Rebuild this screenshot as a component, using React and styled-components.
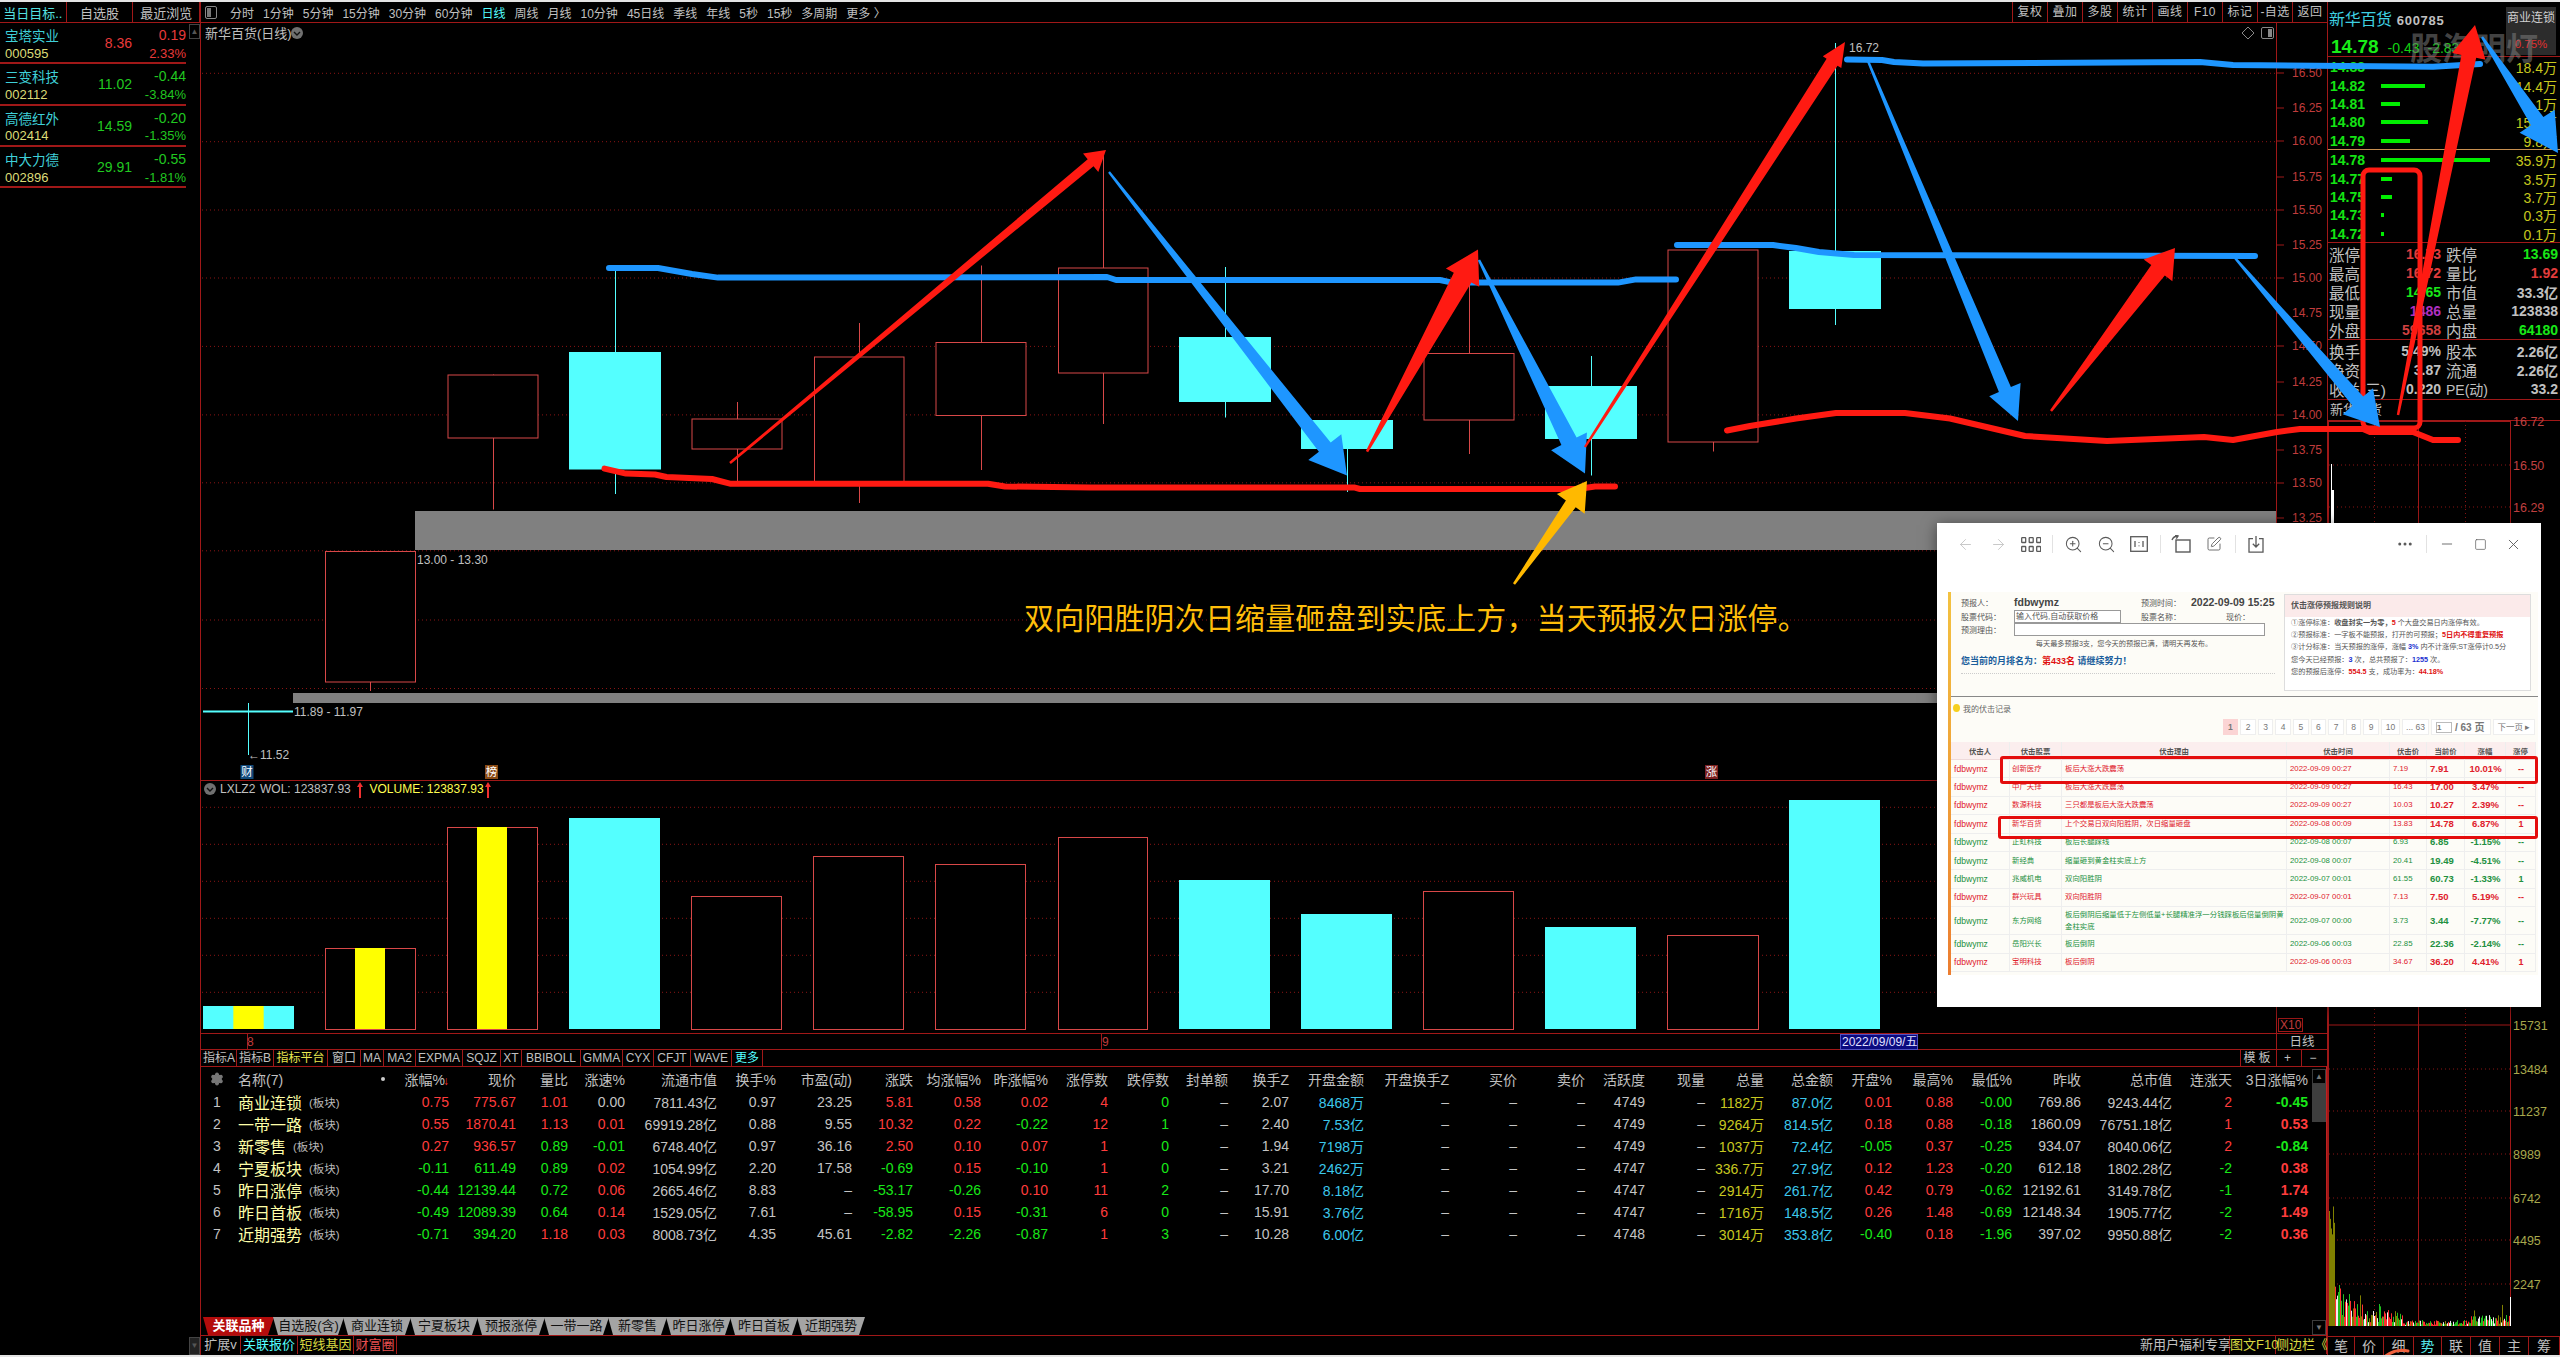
import React from "react";
import styled, { createGlobalStyle } from "styled-components";
import { ArrowLeft, ArrowRight, ZoomIn, ZoomOut, SquarePen, Ellipsis, Minus, Square, X, Settings } from "lucide-react";

const SANS = `"Liberation Sans", "Noto Sans CJK SC", sans-serif`;
const LINE = "#a01818";
const DOT = "#8a1414";
const RED = "#ff3c3c";
const GREEN = "#18e818";
const CYAN = "#54ffff";
const CANDLE = "#d84848";

const Global = createGlobalStyle`
  html, body { margin: 0; padding: 0; background: #000; }
  body { font-family: ${SANS}; color: #c8c8c8; }
  * { box-sizing: border-box; }
`;

const Page = styled.div`
  position: relative;
  width: 2560px;
  height: 1357px;
  overflow: hidden;
  background: #000;
  border-top: 2px solid #e4e4e4;
  border-bottom: 2px solid #e4e4e4;
  display: grid;
  grid-template-columns: 200px 2127px 233px;
`;

/* ---------- left watch list ---------- */
const LeftCol = styled.div`
  display: flex;
  flex-direction: column;
  height: 1353px;
`;
const LeftTabs = styled.div`
  display: grid;
  grid-template-columns: repeat(3, 1fr);
  height: 21px;
  border-bottom: 1px solid ${LINE};
`;
const LeftTab = styled.div`
  display: flex;
  align-items: center;
  justify-content: center;
  font-size: 13px;
  border-right: 1px solid ${LINE};
  color: ${(p) => (p.$active ? "#54e0e0" : "#c0c0c0")};
`;
const LeftBody = styled.div`
  display: flex;
  justify-content: space-between;
  flex: 1;
`;
const WatchList = styled.div`
  width: 186px;
`;
const WatchRow = styled.div`
  display: grid;
  grid-template-columns: 70px 57px 54px;
  grid-template-rows: 1fr 1fr;
  height: 41.3px;
  padding: 2px 5px 1px 5px;
  border-bottom: 2px solid ${LINE};
  align-items: center;
  font-size: 13.5px;
`;
const WatchName = styled.div`
  color: #3fd0d8;
  font-size: 13.5px;
`;
const WatchCode = styled.div`
  color: #dcdc78;
  grid-row: 2;
  font-size: 13px;
`;
const WatchPrice = styled.div`
  grid-row: 1 / 3;
  grid-column: 2;
  text-align: right;
  font-size: 14px;
  color: ${(p) => p.$c};
`;
const WatchChange = styled.div`
  text-align: right;
  font-size: ${(p) => (p.$small ? 13 : 14)}px;
  color: ${(p) => p.$c};
`;
const ScrollNub = styled.div`
  width: 11px;
  height: 15px;
  border: 1px solid #444;
  margin-top: 1px;
  color: #555;
  font-size: 8px;
  line-height: 13px;
  text-align: center;
`;
const NubBottom = styled(ScrollNub)`
  height: 18px;
  margin: 0 0 0 auto;
  line-height: 16px;
  background: #222;
`;

/* ---------- centre column ---------- */
const CenterCol = styled.div`
  display: flex;
  flex-direction: column;
  border-left: 1px solid ${LINE};
  height: 1353px;
  min-width: 0;
`;
const TopBar = styled.div`
  display: flex;
  align-items: center;
  height: 21px;
  border-bottom: 1px solid ${LINE};
  padding-left: 4px;
`;
const LayoutIcon = styled.span`
  display: inline-block;
  width: 12px;
  height: 13px;
  border: 1px solid #888;
  border-radius: 2px;
  margin-right: 6px;
  background: linear-gradient(90deg, #777 0 45%, #000 45%);
  box-shadow: inset 0 0 0 1px #000;
`;
const Period = styled.span`
  font-size: 12px;
  white-space: nowrap;
  margin-left: ${(p) => p.$first ? 7 : 9}px;
  color: ${(p) => (p.$active ? "#54ffff" : "#c0c0c0")};
`;
const Spacer = styled.div`
  flex: 1;
`;
const TopButton = styled.div`
  width: 35px;
  height: 20px;
  border-left: 1px solid ${LINE};
  text-align: center;
  font-size: 12px;
  line-height: 20px;
  color: #c0c0c0;
  letter-spacing: 0.4px;
`;
const ChartSvg = styled.svg`
  display: block;
  flex: none;
  overflow: visible;
`;
const T = styled.text`
  font-family: ${SANS};
  font-size: ${(p) => p.$s || 12}px;
  fill: ${(p) => p.$f || "#c0c0c0"};
  text-anchor: ${(p) => p.$a || "start"};
  dominant-baseline: central;
`;

/* indicator strip */
const IndicatorBar = styled.div`
  display: flex;
  height: 16px;
  flex: none;
  padding-left: 1px;
`;
const IndicatorTab = styled.div`
  width: ${(p) => p.$w}px;
  text-align: center;
  font-size: 12px;
  line-height: 16px;
  white-space: nowrap;
  border-right: 1px solid ${LINE};
  color: ${(p) => p.$c || "#c0c0c0"};
  background: ${(p) => p.$bg || "transparent"};
`;
const TemplateTab = styled(IndicatorTab)`
  border-right: none;
  border-left: 1px solid ${LINE};
  letter-spacing: 3px;
`;

/* lower table block */
const Lower = styled.div`
  display: flex;
  height: 270px;
  flex: none;
  border-top: 1px solid ${LINE};
  border-bottom: 1px solid ${LINE};
  border-right: 1px solid #c02020;
`;
const LowerMain = styled.div`
  display: flex;
  flex-direction: column;
  width: 2111px;
`;
const TableBox = styled.div`
  flex: 1;
`;
const RowGrid = styled.div`
  display: grid;
  grid-template-columns: 189px 59px 67px 52px 57px 92px 59px 76px 61px 68px 67px 60px 61px 59px 61px 75px 85px 68px 68px 60px 60px 59px 69px 59px 61px 59px 69px 91px 60px 76px;
  align-items: center;
  height: ${(p) => (p.$head ? 23 : 22)}px;
`;
const Cell = styled.div`
  text-align: right;
  font-size: 14px;
  white-space: nowrap;
  font-weight: ${(p) => (p.$bold ? 700 : 400)};
  color: ${(p) => p.$c || "#c4c4c4"};
`;
const HeadCell = styled(Cell)`
  color: #c0c0c0;
  font-size: 14px;
`;
const SortArrow = styled.span`
  color: #ff3030;
  font-size: 12px;
  margin-left: -2px;
`;
const NameCell = styled.div`
  display: flex;
  align-items: center;
`;
const HeadName = styled(NameCell)`
  position: relative;
  color: #c0c0c0;
  font-size: 14px;
`;
const IndexBox = styled.div`
  width: 32px;
  margin-right: 5px;
  text-align: center;
  font-size: 14px;
  color: #c4c4c4;
  display: flex;
  justify-content: center;
`;
const StockName = styled.span`
  font-size: 16px;
  color: #ffffa8;
`;
const BlockTag = styled.span`
  font-size: 11.5px;
  margin-left: 7px;
  color: #b8b8b8;
`;
const Dot = styled.span`
  margin-left: auto;
  margin-right: 5px;
  width: 4px;
  height: 4px;
  border-radius: 50%;
  background: #ccc;
`;
const SlantTabs = styled.div`
  display: flex;
  height: 18px;
  padding-left: 2px;
`;
const SlantTab = styled.div`
  width: ${(p) => p.$w}px;
  margin-right: -1px;
  text-align: center;
  font-size: 13px;
  line-height: 18px;
  font-weight: ${(p) => (p.$active ? 700 : 400)};
  color: ${(p) => (p.$active ? "#fff" : "#111")};
  background: ${(p) => (p.$active ? "#b40c0c" : "#a4a4a4")};
  clip-path: polygon(0 0, 100% 0, calc(100% - 6px) 100%, 5px 100%);
`;
const ScrollBar = styled.div`
  width: 14px;
  display: flex;
  flex-direction: column;
  margin-left: 1px;
  padding: 2px 0 0 0;
`;
const ScrollBtn = styled.div`
  height: 15px;
  border: 1px solid #3c3c3c;
  color: #777;
  font-size: 8px;
  line-height: 13px;
  text-align: center;
`;
const ScrollThumb = styled.div`
  height: 38px;
  background: #3e3e3e;
  margin-bottom: auto;
`;

const BottomBar = styled.div`
  display: flex;
  height: 18px;
  flex: none;
`;
const BottomItem = styled.div`
  width: ${(p) => p.$w}px;
  text-align: center;
  font-size: 13px;
  line-height: 18px;
  white-space: nowrap;
  border-right: 1px solid ${LINE};
  color: ${(p) => p.$c || "#c0c0c0"};
`;

/* ---------- right column ---------- */
const RightCol = styled.div`
  display: flex;
  flex-direction: column;
  border-left: 1px solid ${LINE};
  height: 1353px;
`;
const QuoteHead = styled.div`
  position: relative;
  height: 55px;
  border-bottom: 1px solid ${LINE};
  padding: 4px 0 0 1px;
`;
const TitleLine = styled.div`
  display: flex;
  align-items: baseline;
  gap: 5px;
`;
const StockTitle = styled.span`
  font-size: 16px;
  color: #3fd0e0;
  letter-spacing: -0.3px;
`;
const StockCode = styled.span`
  font-size: 13px;
  font-weight: 700;
  letter-spacing: 0.7px;
  color: #c0c0c0;
`;
const PriceLine = styled.div`
  display: flex;
  align-items: baseline;
  margin-top: 6px;
  padding-left: 2px;
  color: #12d012;
  font-size: 14px;
`;
const BigPrice = styled.span`
  font-size: 19px;
  font-weight: 700;
  color: #18ee18;
  margin-right: 9px;
`;
const PriceDelta = styled.span`
  margin-right: 8px;
`;
const LinkedBox = styled.div`
  position: absolute;
  left: 178px;
  top: 5px;
  width: 50px;
  height: 48px;
  background: #2c2c2c;
  text-align: center;
  font-size: 12px;
  line-height: 22px;
  color: #d0d0d0;
`;
const LinkedPct = styled.div`
  color: #e03030;
  font-size: 11.5px;
  margin-top: 4px;
`;
const Watermark = styled.div`
  position: absolute;
  left: 82px;
  top: 21px;
  font-size: 32px;
  font-weight: 700;
  white-space: nowrap;
  color: rgba(125, 125, 125, 0.55);
`;
const BookSide = styled.div`
  height: 93px;
  border-bottom: 1px solid ${(p) => p.$line};
  padding: 0 3px 0 1px;
  display: flex;
  flex-direction: column;
  justify-content: space-around;
`;
const BookRow = styled.div`
  display: grid;
  grid-template-columns: 52px 1fr auto;
  align-items: center;
  height: 18px;
`;
const BookPrice = styled.span`
  font-size: 14px;
  font-weight: 700;
  color: #14e414;
  padding-left: 1px;
`;
const BookBar = styled.span`
  display: block;
  height: 4px;
  width: ${(p) => p.$w}px;
  background: #00ee00;
`;
const BookVol = styled.span`
  font-size: 14px;
  color: #c8c81e;
`;
const StatBlock = styled.div`
  height: ${(p) => p.$h}px;
  border-bottom: 1px solid ${LINE};
  padding: 1px 2px 0 1px;
  display: grid;
  grid-template-columns: 1fr 1fr;
  column-gap: 5px;
  grid-auto-rows: 19px;
`;
const Stat = styled.div`
  display: flex;
  justify-content: space-between;
  align-items: center;
  white-space: nowrap;
`;
const StatLabel = styled.span`
  font-size: ${(p) => p.$s || 15.5}px;
  color: #c0c0c0;
`;
const StatValue = styled.span`
  font-size: 14px;
  font-weight: 700;
  color: ${(p) => p.$c || "#c0c0c0"};
`;
const NameRow = styled.div`
  height: 21px;
  border-bottom: 1px solid ${LINE};
  font-size: 13px;
  line-height: 20px;
  padding-left: 2px;
  color: #c0c0c0;
`;
const RightTabs = styled.div`
  display: grid;
  grid-template-columns: 27px 29px 30px 28px 29px 29px 29px 31px;
  height: 19px;
  border-top: 1px solid ${LINE};
`;
const RightTab = styled.div`
  font-size: 14px;
  line-height: 18px;
  text-align: center;
  border-right: 1px solid ${LINE};
  color: ${(p) => (p.$active ? "#54e8e8" : "#c0c0c0")};
`;

/* ---------- annotation overlay ---------- */
const Overlay = styled.svg`
  position: absolute;
  left: 0;
  top: -2px;
  width: 2560px;
  height: 1357px;
  pointer-events: none;
`;
const Caption = styled.div`
  position: absolute;
  left: 1024px;
  top: 592px;
  font-family: "Noto Sans CJK SC", sans-serif;
  font-size: 30px;
  line-height: 44px;
  white-space: nowrap;
  color: #ffbe0a;
  letter-spacing: 0.15px;
`;

/* ---------- floating viewer window ---------- */
const Viewer = styled.div`
  position: absolute;
  left: 1937px;
  top: 521px;
  width: 604px;
  height: 484px;
  background: #fff;
  box-shadow: 0 2px 14px rgba(0, 0, 0, 0.5);
  display: flex;
  flex-direction: column;
  color: #333;
`;
const ViewerBar = styled.div`
  display: flex;
  align-items: center;
  height: 42px;
  padding: 0 11.5px;
  flex: none;
`;
const ToolBtn = styled.div`
  width: 33px;
  display: flex;
  align-items: center;
  justify-content: center;
  color: ${(p) => (p.$dim ? "#c4c4c4" : "#5a5a5a")};
`;
const ToolSep = styled.div`
  width: 1px;
  height: 18px;
  margin: 0 4px;
  background: #e2e2e2;
`;
const Shot = styled.div`
  position: relative;
  margin: 27px 3px 0 11px;
  height: 383px;
  background: #fdfcf7;
  border-left: 3px solid;
  border-image: linear-gradient(#f3c240, #ec7d30) 1;
  overflow: hidden;
  display: flex;
  flex-direction: column;
`;
const ShotTop = styled.div`
  display: flex;
  height: 105px;
  flex: none;
  border-bottom: 1px solid #888;
`;
const FormArea = styled.div`
  width: 333px;
  padding: 3px 9px 0 10px;
  font-size: 8px;
  color: #555;
`;
const FormLine = styled.div`
  display: flex;
  align-items: center;
  height: ${(p) => p.$h || 14}px;
`;
const FormLabel = styled.span`
  width: ${(p) => p.$w}px;
  flex: none;
`;
const FormBold = styled.span`
  width: ${(p) => p.$w || "auto"};
  font-size: 10.5px;
  font-weight: 700;
  color: #444;
  white-space: nowrap;
`;
const FormInput = styled.div`
  width: ${(p) => p.$w}px;
  height: 13px;
  flex: none;
  margin-right: ${(p) => p.$mr || 0}px;
  border: 1px solid #999;
  background: #fff;
  font-size: 8px;
  line-height: 12px;
  padding-left: 1px;
  white-space: nowrap;
  overflow: hidden;
`;
const Notice = styled.div`
  font-size: 7.2px;
  text-align: center;
  height: 13px;
  line-height: 15px;
  padding-left: 12px;
  white-space: nowrap;
`;
const RankLine = styled.div`
  margin-top: 5px;
  height: 15px;
  line-height: 14px;
  font-size: 9px;
  font-weight: 700;
  color: #1b5e9c;
  white-space: nowrap;
  border-bottom: 1px dotted transparent;
`;
const DottedRule = styled.div`
  margin-top: 4px;
  border-top: 1px dotted #ccc;
`;
const RuleBox = styled.div`
  width: 247px;
  height: 97px;
  margin-top: 2px;
  border: 1px solid #ddd;
  background: #fff;
`;
const RuleHead = styled.div`
  height: 22px;
  background: #fbeaea;
  padding-left: 6px;
  font-size: 8px;
  font-weight: 700;
  line-height: 22px;
  color: #555;
`;
const RuleText = styled.div`
  height: 12.2px;
  padding-left: 6px;
  font-size: 7.2px;
  line-height: 12px;
  white-space: nowrap;
  color: #555;
  &:first-of-type { margin-top: 5px; }
`;
const Hot = styled.b`
  color: ${(p) => p.$c || "#e01010"};
  font-weight: 700;
`;
const RecordTitle = styled.div`
  display: flex;
  align-items: center;
  gap: 3px;
  height: 22px;
  padding-left: 2px;
  font-size: 8px;
  color: #666;
  flex: none;
`;
const Bulb = styled.span`
  width: 7px;
  height: 8px;
  border-radius: 50%;
  background: #f6d020;
`;
const Pager = styled.div`
  display: flex;
  justify-content: flex-end;
  gap: 2px;
  height: 16px;
  padding-right: 3px;
  flex: none;
`;
const PageItem = styled.div`
  width: ${(p) => p.$w || 15.6}px;
  font-size: ${(p) => p.$s || 8.5}px;
  line-height: 15px;
  text-align: center;
  white-space: nowrap;
  font-weight: ${(p) => (p.$on ? 700 : 400)};
  color: #777;
  background: ${(p) => (p.$on ? "#fbd4d4" : "#fff")};
  border: 1px solid ${(p) => (p.$on ? "#fbd4d4" : "#eee")};
`;
const PageGoto = styled(PageItem)`
  font-weight: 700;
  font-size: 10px;
  display: flex;
  align-items: center;
  gap: 3px;
  padding-left: 4px;
`;
const PageBox = styled.span`
  width: 16px;
  height: 11px;
  border: 1px solid #bbb;
  background: #fff;
  font-size: 8px;
  line-height: 9px;
  text-align: left;
`;
const RecordGrid = styled.div`
  display: grid;
  grid-template-columns: 59px 52px 225px 103px 37px 38px 41px 30px;
  margin-top: 7px;
  align-items: stretch;
`;
const RecHead = styled.div`
  height: 18px;
  background: #fbeeee;
  border-bottom: 1px solid #eedada;
  border-right: 1px solid #eee;
  text-align: center;
  font-size: 7.4px;
  font-weight: 700;
  line-height: 20px;
  color: #555;
`;
const RecCell = styled.div`
  height: ${(p) => (p.$tall ? 28 : 18.4)}px;
  display: flex;
  align-items: center;
  justify-content: ${(p) => (p.$center ? "center" : "flex-start")};
  padding: 0 2px 0 ${(p) => p.$pl || 3}px;
  border-right: 1px solid #eee;
  border-bottom: 1px solid #eee;
  font-size: ${(p) => p.$s || 7.4}px;
  line-height: 12px;
  font-weight: ${(p) => (p.$bold ? 700 : 400)};
  color: ${(p) => (p.$up ? "#e0202c" : "#229040")};
  overflow: hidden;
`;
const Highlight = styled.div`
  position: absolute;
  left: ${(p) => p.$l}px;
  top: ${(p) => p.$t}px;
  width: ${(p) => p.$w}px;
  height: ${(p) => p.$h}px;
  border: 3px solid #e40d0d;
  border-radius: 3px;
`;

/* ---------- data ---------- */
const PERIODS = ["分时","1分钟","5分钟","15分钟","30分钟","60分钟","日线","周线","月线","10分钟","45日线","季线","年线","5秒","15秒","多周期","更多 〉"];
const TOOLS = ["复权","叠加","多股","统计","画线","F10","标记","-自选","返回"];
const WATCH = [
  ["宝塔实业","000595","8.36","0.19","2.33%",true],
  ["三变科技","002112","11.02","-0.44","-3.84%",false],
  ["高德红外","002414","14.59","-0.20","-1.35%",false],
  ["中大力德","002896","29.91","-0.55","-1.81%",false],
];
const INDICATORS = [["指标A",35],["指标B",37],["指标平台",54,"#e8e850"],["窗口",33],["MA",23],["MA2",32],["EXPMA",47],["SQJZ",38],["XT",21],["BBIBOLL",59],["GMMA",42],["CYX",31],["CFJT",37],["WAVE",41],["更多",31,"#54ffff"]];
const COLS = [
  ["涨幅%","sign"],["现价","row"],["量比","ratio"],["涨速%","sign"],["流通市值"],["换手%"],["市盈(动)"],["涨跌","sign"],["均涨幅%","sign"],["昨涨幅%","sign"],["涨停数","red"],["跌停数","green"],["封单额"],["换手Z"],["开盘金额","cyan"],["开盘换手Z"],["买价"],["卖价"],["活跃度"],["现量"],["总量","yellow"],["总金额","cyan"],["开盘%","sign"],["最高%","sign"],["最低%","sign"],["昨收"],["总市值"],["连涨天","sign"],["3日涨幅%","signb"],
];
const BLOCKS = [
  ["商业连锁","0.75 775.67 1.01 0.00 7811.43亿 0.97 23.25 5.81 0.58 0.02 4 0 – 2.07 8468万 – – – 4749 – 1182万 87.0亿 0.01 0.88 -0.00 769.86 9243.44亿 2 -0.45"],
  ["一带一路","0.55 1870.41 1.13 0.01 69919.28亿 0.88 9.55 10.32 0.22 -0.22 12 1 – 2.40 7.53亿 – – – 4749 – 9264万 814.5亿 0.18 0.88 -0.18 1860.09 76751.18亿 1 0.53"],
  ["新零售","0.27 936.57 0.89 -0.01 6748.40亿 0.97 36.16 2.50 0.10 0.07 1 0 – 1.94 7198万 – – – 4749 – 1037万 72.4亿 -0.05 0.37 -0.25 934.07 8040.06亿 2 -0.84"],
  ["宁夏板块","-0.11 611.49 0.89 0.02 1054.99亿 2.20 17.58 -0.69 0.15 -0.10 1 0 – 3.21 2462万 – – – 4747 – 336.7万 27.9亿 0.12 1.23 -0.20 612.18 1802.28亿 -2 0.38"],
  ["昨日涨停","-0.44 12139.44 0.72 0.06 2665.46亿 8.83 – -53.17 -0.26 0.10 11 2 – 17.70 8.18亿 – – – 4747 – 2914万 261.7亿 0.42 0.79 -0.62 12192.61 3149.78亿 -1 1.74"],
  ["昨日首板","-0.49 12089.39 0.64 0.14 1529.05亿 7.61 – -58.95 0.15 -0.31 6 0 – 15.91 3.76亿 – – – 4747 – 1716万 148.5亿 0.26 1.48 -0.69 12148.34 1905.77亿 -2 1.49"],
  ["近期强势","-0.71 394.20 1.18 0.03 8008.73亿 4.35 45.61 -2.82 -2.26 -0.87 1 3 – 10.28 6.00亿 – – – 4748 – 3014万 353.8亿 -0.40 0.18 -1.96 397.02 9950.88亿 -2 0.36"],
];
const SLANT = [["关联品种",71,true],["自选股(含)",71],["商业连锁",68],["宁夏板块",68],["预报涨停",68],["一带一路",65],["新零售",59],["昨日涨停",65],["昨日首板",68],["近期强势",68]];
const SELL = [["14.83",0,"18.4万"],["14.82",44,"14.4万"],["14.81",19,"6.1万"],["14.80",47,"15.9万"],["14.79",29,"9.8万"]];
const BUY = [["14.78",109,"35.9万"],["14.77",11,"3.5万"],["14.75",11,"3.7万"],["14.73",3,"0.3万"],["14.72",3,"0.1万"]];

const CANDLES = [
  [324,414,551,681.5,551,691,0],[446.5,536.5,374.5,437.5,374.5,509.5,0],[568,659,352,468.5,270,494,1],
  [690.5,780.5,418.5,448.5,402,481,0],[813,902.5,356.5,484,323,503,0],[934.5,1024.5,342,415,265.5,470,0],
  [1057,1146.5,267.5,372.5,151,424,0],[1178,1269,337,401,267,417.5,1],[1300,1391,420,448,420,492,1],
  [1422.5,1512.5,353,419.5,259,454,0],[1544,1635,386,438,356,475.5,1],[1666.5,1756.5,249.5,441.5,249.5,451.5,0],
  [1788,1879,251,308,43,325,1],
];
const BARS = [
  [202,293,1006,"y"],[324,414,948,"y"],[446,536,827,"y"],[568,659,818,"c"],[690,780,896,"r"],[812,902,856,"r"],
  [934,1024,864,"r"],[1057,1146,837,"r"],[1178,1269,880,"c"],[1300,1391,914,"c"],[1422,1512,891,"r"],[1544,1635,927,"c"],
  [1666,1757,935,"r"],[1788,1879,800,"c"],
];
const PRICE_GRID = [73.3,141.7,210,278,346.4,414.9,482.8,550.8,620,688.5];
const PRICE_LABELS = [["16.50",73],["16.25",108],["16.00",141],["15.75",177],["15.50",210],["15.25",245],["15.00",278],["14.75",313],["14.50",346],["14.25",382],["14.00",415],["13.75",450],["13.50",483],["13.25",518]];
const VOL_GRID = [807.3,844.3,881.3,918.3,955.3,992.3];
const TICK_RIGHT = [["16.72",421,"#c04040"],["16.50",465,"#c04040"],["16.29",507,"#c04040"],["15731",1025,"#a8a84c"],["13484",1069,"#a8a84c"],["11237",1111,"#a8a84c"],["8989",1154,"#a8a84c"],["6742",1198,"#a8a84c"],["4495",1240,"#a8a84c"],["2247",1284,"#a8a84c"]];

const REASONS = [
  ["创新医疗","板后大涨大跌震荡","2022-09-09 00:27","7.19","7.91","10.01%","--",1],
  ["中广天择","板后大涨大跌震荡","2022-09-09 00:27","16.43","17.00","3.47%","--",1],
  ["数源科技","三只都是板后大涨大跌震荡","2022-09-09 00:27","10.03","10.27","2.39%","--",1],
  ["新华百货","上个交易日双向阳胜阴，次日缩量砸盘","2022-09-08 00:09","13.83","14.78","6.87%","1",1],
  ["正虹科技","板后长腿踩线","2022-09-08 00:07","6.93","6.85","-1.15%","--",0],
  ["新经典","缩量砸到黄金柱实底上方","2022-09-08 00:07","20.41","19.49","-4.51%","--",0],
  ["兆威机电","双向阳胜阴","2022-09-07 00:01","61.55","60.73","-1.33%","1",0],
  ["群兴玩具","双向阳胜阴","2022-09-07 00:01","7.13","7.50","5.19%","--",1],
  ["东方网络","板后倒阴后缩量低于左侧低量+长腿精准浮一分钱踩板后倍量倒阴黄金柱实底","2022-09-07 00:00","3.73","3.44","-7.77%","--",0,true],
  ["岳阳兴长","板后倒阴","2022-09-06 00:03","22.85","22.36","-2.14%","--",0],
  ["宝明科技","板后倒阴","2022-09-06 00:03","34.67","36.20","4.41%","1",1],
];

/* ---------- helpers ---------- */
const valueColor = (kind, v, rowUp) => {
  if (kind === "row") return rowUp ? RED : GREEN;
  if (kind === "ratio") return parseFloat(v) >= 1 ? RED : GREEN;
  if (kind === "red") return RED;
  if (kind === "green") return GREEN;
  if (kind === "cyan") return "#3cc8ec";
  if (kind === "yellow") return "#c8c820";
  if (kind === "sign" || kind === "signb") {
    if (v.startsWith("-")) return GREEN;
    return parseFloat(v) === 0 ? "#c4c4c4" : RED;
  }
  return "#c4c4c4";
};

const arrow = (tx, ty, hx, hy, shaft, len, wide) => {
  const d = Math.hypot(hx - tx, hy - ty);
  const ux = (hx - tx) / d, uy = (hy - ty) / d;
  const nx = -uy, ny = ux;
  const bx = hx - ux * len, by = hy - uy * len;
  const p = (a, b) => `${a.toFixed(1)},${b.toFixed(1)}`;
  return [
    p(tx + nx * 1.2, ty + ny * 1.2),
    p(bx + (nx * shaft) / 2, by + (ny * shaft) / 2),
    p(bx + (nx * wide) / 2, by + (ny * wide) / 2),
    p(hx, hy),
    p(bx - (nx * wide) / 2, by - (ny * wide) / 2),
    p(bx - (nx * shaft) / 2, by - (ny * shaft) / 2),
    p(tx - nx * 1.2, ty - ny * 1.2),
  ].join(" ");
};

const tickBars = () => {
  const out = [];
  let s = 17;
  const rnd = () => { s = (s * 1103515245 + 12345) & 0x7fffffff; return s / 0x7fffffff; };
  const palette = ["#ff3030", "#20c020", "#808000", "#20c020", "#ff3030", "#f0f0f0"];
  for (let x = 2328; x < 2509; x += 1) {
    let h;
    if (x < 2334) h = 90 + rnd() * 34;
    else if (x < 2340) h = 25 + rnd() * 22;
    else if (x < 2362) h = 8 + rnd() * 24;
    else if (x < 2402) h = 3 + rnd() * (rnd() > 0.85 ? 24 : 12);
    else if (x < 2470) h = 1 + rnd() * 5;
    else h = 2 + rnd() * (rnd() > 0.85 ? 20 : 9);
    const c = x < 2334 ? "#808000" : palette[Math.floor(rnd() * palette.length)];
    out.push(<rect key={x} x={x} y={1326 - h} width="1" height={h} fill={c} />);
  }
  return out;
};

const ChevronBadge = ({ x, y }) => (
  <g>
    <circle cx={x} cy={y} r="6" fill="#707070" />
    <path d={`M${x - 3} ${y - 1}l3 3 3-3`} fill="none" stroke="#111" strokeWidth="1.4" />
  </g>
);

const Marker = ({ x, bg, label }) => (
  <g>
    <rect x={x - 6.5} y="765" width="13" height="14" fill={bg} />
    <T x={x} y="772" $a="middle" $s={11.5} $f="#fff">{label}</T>
  </g>
);

const UpMark = ({ x }) => (
  <path d={`M${x} 782l3 5h-2v11h-2v-11h-2z`} fill="#f03030" />
);

/* ---------- chart drawings ---------- */
const PriceChart = () => (
  <ChartSvg width="2126" height="757" viewBox="200 23 2126 757">
    <line x1="2275.5" y1="23" x2="2275.5" y2="780" stroke={LINE} />
    {PRICE_GRID.map((y) => (
      <line key={y} x1="201" x2="2275" y1={y} y2={y} stroke={DOT} strokeDasharray="1 3" />
    ))}
    {PRICE_LABELS.map(([t, y]) => (
      <g key={t}>
        <line x1="2275" x2="2283" y1={y} y2={y} stroke={LINE} />
        <T x="2291" y={y} $f="#c03c3c">{t}</T>
      </g>
    ))}
    <rect x="414" y="511" width="1861" height="39" fill="#808080" />
    <rect x="292" y="693" width="1983" height="10" fill="#808080" />
    <T x="416" y="560" $s={12}>13.00 - 13.30</T>
    <rect x="202" y="710.5" width="90" height="2" fill={CYAN} />
    <line x1="247.5" y1="703" x2="247.5" y2="755" stroke={CYAN} />
    <T x="293" y="712" $s={12}>11.89 - 11.97</T>
    <T x="247" y="755" $s={12}>←11.52</T>
    {CANDLES.map(([l, r, t, b, wt, wb, solid], i) => {
      const cx = Math.round((l + r) / 2) + 0.5;
      const c = solid ? CYAN : CANDLE;
      return (
        <g key={i}>
          <line x1={cx} x2={cx} y1={wt} y2={wb} stroke={c} />
          <rect x={l + 0.5} y={t + 0.5} width={r - l} height={b - t} fill={solid ? CYAN : "#000"} stroke={c} />
        </g>
      );
    })}
    <T x="1848" y="48" $s={12}>16.72</T>
    <T x="204" y="33" $s={13}>新华百货(日线)</T>
    <ChevronBadge x={296} y={33} />
    <path d="M2247 27l6 6-6 6-6-6z" fill="none" stroke="#888" />
    <rect x="2260.5" y="27.5" width="12" height="11" rx="1.5" fill="#000" stroke="#888" />
    <rect x="2267" y="29" width="4" height="8" fill="#888" />
    <Marker x={246} bg="#124a7c" label="财" />
    <Marker x={490.5} bg="#8a4a14" label="榜" />
    <Marker x={1710.5} bg="#7a2020" label="涨" />
  </ChartSvg>
);

const VolumeChart = () => (
  <ChartSvg width="2126" height="270" viewBox="200 780 2126 270">
    <line x1="200" x2="2326" y1="780.5" y2="780.5" stroke={LINE} />
    <line x1="2275.5" y1="780" x2="2275.5" y2="1033" stroke={LINE} />
    {VOL_GRID.map((y) => (
      <line key={y} x1="201" x2="2275" y1={y} y2={y} stroke={DOT} strokeDasharray="1 3" />
    ))}
    <ChevronBadge x={209} y={789} />
    <T x="219" y="789">LXLZ2</T>
    <T x="259" y="789">WOL: 123837.93</T>
    <UpMark x={359} />
    <T x="368.5" y="789" $f="#ffff50">VOLUME: 123837.93</T>
    <UpMark x={487} />
    {BARS.map(([l, r, top, k]) => {
      const h = 1029 - top;
      const w = r - l;
      const mid = l + w / 3;
      if (k === "r") return <rect key={l} x={l + 0.5} y={top + 0.5} width={w} height={h} fill="#000" stroke={CANDLE} />;
      if (k === "c") return <rect key={l} x={l} y={top} width={w} height={h} fill={CYAN} />;
      return (
        <g key={l}>
          {l === 202
            ? <rect x={l} y={top} width={w} height={h} fill={CYAN} />
            : <rect x={l + 0.5} y={top + 0.5} width={w} height={h} fill="#000" stroke={CANDLE} />}
          <rect x={mid} y={top} width={w / 3} height={h} fill="#ffff00" />
        </g>
      );
    })}
    <line x1="200" x2="2326" y1="1033.5" y2="1033.5" stroke={LINE} />
    <line x1="200" x2="2326" y1="1049.5" y2="1049.5" stroke={LINE} />
    <line x1="246.5" x2="246.5" y1="1033" y2="1049" stroke={LINE} />
    <T x="246" y="1042" $f="#c03c3c">8</T>
    <line x1="1100.5" x2="1100.5" y1="1033" y2="1049" stroke={LINE} />
    <T x="1101" y="1042" $f="#c03c3c">9</T>
    <rect x="1839.5" y="1034.5" width="77" height="15" fill="#0a0a80" stroke="#5050c0" />
    <T x="1841" y="1042" $s={12} $f="#e0e0ff">2022/09/09/五</T>
    <rect x="2277.5" y="1018.5" width="24" height="13" fill="none" stroke={LINE} />
    <T x="2279" y="1025" $s={12} $f="#c03c3c">X10</T>
    <line x1="2275.5" y1="1033" x2="2275.5" y2="1050" stroke={LINE} />
    <T x="2301" y="1042" $a="middle" $s={12.5}>日线</T>
  </ChartSvg>
);

const TickChart = () => (
  <ChartSvg width="232" height="915" viewBox="2327 421 232 915">
    <rect x="2327.5" y="421.5" width="182" height="904" fill="none" stroke={LINE} />
    <line x1="2417.5" x2="2417.5" y1="421" y2="1326" stroke={LINE} />
    <line x1="2373.5" x2="2373.5" y1="421" y2="1326" stroke={DOT} strokeDasharray="1 3" />
    <line x1="2464.5" x2="2464.5" y1="421" y2="1326" stroke={DOT} strokeDasharray="1 3" />
    {TICK_RIGHT.map(([t, y, c], i) => (
      <g key={t}>
        {i > 0 && i !== 3 && (
          <line x1="2328" x2="2510" y1={y} y2={y} stroke={DOT} strokeDasharray="1 3" />
        )}
        <T x="2512" y={y + 1} $s={12.5} $f={c}>{t}</T>
      </g>
    ))}
    <line x1="2327" x2="2510" y1="1025" y2="1025" stroke={LINE} />
    <rect x="2330" y="464" width="1" height="60" fill="#fff" />
    <rect x="2331" y="490" width="2" height="34" fill="#fff" />
    {tickBars()}
    <rect x="2509" y="1297" width="1" height="29" fill="#fff" />
  </ChartSvg>
);

const Annotations = () => (
  <Overlay viewBox="0 0 2560 1357">
    <g fill="none" strokeLinecap="round" strokeLinejoin="round" strokeWidth="6">
      <polyline stroke="#1e96ff" points="609,268 658,268 692,274 718,277.6 1107,277 1116,280 1440,280 1452,282.6 1618,282.6 1636,279.4 1676,279.4" />
      <polyline stroke="#1e96ff" points="1677,245 1773,245 1796,248 1819,252 1854,255 2255,256" />
      <polyline stroke="#1e96ff" points="1847,59.5 1882,60 1894,62 1923,63.6 2200,62 2233,65 2433,66.7 2480,64" />
      <polyline stroke="#ff1a12" points="604.5,468.6 626,473.6 655,474.5 666.5,477 712,479 730,483.7 988,483.7 1005,486.5 1090,487.4 1354,487.4 1360,489 1578,489 1595,486.5 1615,486.5" />
      <polyline stroke="#ff1a12" points="1727,430.5 1750,426 1796,418.5 1836,413 1905,413 1950,418.5 2025,436 2107,441 2204,437 2233,440 2277,432 2300,429 2363,429 2370,432 2413,432 2433,440 2458,440" />
      <rect x="2363" y="170" width="57" height="258" rx="6" stroke="#ff1a12" strokeWidth="5" />
      <path d="M2383 1358Q2395 1348 2408 1351" stroke="#f0603c" strokeWidth="3" />
    </g>
    <polygon fill="#ff1a12" points={arrow(730, 463, 1106, 150, 9, 20, 24)} />
    <polygon fill="#1e96ff" points={arrow(1109, 172, 1347, 475.5, 15, 36, 42)} />
    <polygon fill="#ff1a12" points={arrow(1367, 451.6, 1478, 249.6, 20, 32, 38)} />
    <polygon fill="#1e96ff" points={arrow(1479, 260, 1585, 473.6, 17, 36, 40)} />
    <polygon fill="#ff1a12" points={arrow(1585, 447, 1845, 42, 13, 24, 22)} />
    <polygon fill="#1e96ff" points={arrow(1868, 61, 2018, 421, 13, 34, 34)} />
    <polygon fill="#ff1a12" points={arrow(2051, 411, 2175, 248, 17, 28, 36)} />
    <polygon fill="#1e96ff" points={arrow(2235, 258, 2380, 427, 14, 34, 40)} />
    <polygon fill="#ff1a12" points={arrow(2398, 415, 2475, 25, 15, 32, 34)} />
    <polygon fill="#1e96ff" points={arrow(2482, 37, 2558, 153, 15, 38, 42)} />
    <polygon fill="#ffb900" points={arrow(1514, 584, 1587, 481, 12, 28, 34)} />
  </Overlay>
);

const GridIcon = () => (
  <svg width="20" height="15" viewBox="0 0 20 15" fill="none" stroke="currentColor" strokeWidth="1.3">
    {[0, 7.5, 15].map((x) => [0.7, 9.5].map((y) => <rect key={`${x}${y}`} x={x + 0.7} y={y} width="4" height="4.8" rx="0.6" />))}
  </svg>
);
const OneToOne = () => (
  <svg width="18" height="16" viewBox="0 0 18 16" fill="none" stroke="currentColor" strokeWidth="1.3">
    <rect x="0.7" y="0.7" width="16.6" height="14.6" />
    <path d="M5 5v6M13 5v6M9 6v.8M9 9.4v.8" />
  </svg>
);
const RotateBox = () => (
  <svg width="20" height="18" viewBox="0 0 20 18" fill="none" stroke="currentColor" strokeWidth="1.4">
    <rect x="5" y="5" width="14" height="12" />
    <path d="M1 5C2 2.5 4 1 7 1M4 .6L7 1 5.3 3.6" />
  </svg>
);
const SaveBox = () => (
  <svg width="16" height="18" viewBox="0 0 16 18" fill="none" stroke="currentColor" strokeWidth="1.3">
    <path d="M5 3.6H1v13.6h14V3.6h-4M8 1v11M4.8 8.8L8 12l3.2-3.2" />
  </svg>
);

const ImageViewer = () => (
  <Viewer>
    <ViewerBar>
      <ToolBtn $dim><ArrowLeft size={17} strokeWidth={1.3} /></ToolBtn>
      <ToolBtn $dim><ArrowRight size={17} strokeWidth={1.3} /></ToolBtn>
      <ToolBtn><GridIcon /></ToolBtn>
      <ToolSep />
      <ToolBtn><ZoomIn size={19} strokeWidth={1.3} /></ToolBtn>
      <ToolBtn><ZoomOut size={19} strokeWidth={1.3} /></ToolBtn>
      <ToolBtn><OneToOne /></ToolBtn>
      <ToolSep />
      <ToolBtn><RotateBox /></ToolBtn>
      <ToolBtn><SquarePen size={16} strokeWidth={1.3} /></ToolBtn>
      <ToolSep />
      <ToolBtn><SaveBox /></ToolBtn>
      <Spacer />
      <ToolBtn><Ellipsis size={18} /></ToolBtn>
      <ToolSep />
      <ToolBtn><Minus size={16} strokeWidth={1.3} /></ToolBtn>
      <ToolBtn><Square size={13} strokeWidth={1.3} /></ToolBtn>
      <ToolBtn><X size={17} strokeWidth={1.3} /></ToolBtn>
    </ViewerBar>
    <Shot>
      <ShotTop>
        <FormArea>
          <FormLine>
            <FormLabel $w={53}>预报人：</FormLabel>
            <FormBold $w="127px">fdbwymz</FormBold>
            <FormLabel $w={50}>预测时间：</FormLabel>
            <FormBold>2022-09-09 15:25</FormBold>
          </FormLine>
          <FormLine>
            <FormLabel $w={53}>股票代码：</FormLabel>
            <FormInput $w={107} $mr={20}>输入代码,自动获取价格</FormInput>
            <FormLabel $w={85}>股票名称：</FormLabel>
            <FormLabel $w={30}>现价：</FormLabel>
          </FormLine>
          <FormLine $h={13}>
            <FormLabel $w={53}>预测理由：</FormLabel>
            <FormInput $w={251} />
          </FormLine>
          <Notice>每天最多预报3支，您今天的预报已满，请明天再发布。</Notice>
          <RankLine>您当前的月排名为：<Hot>第433名</Hot> 请继续努力！</RankLine>
          <DottedRule />
        </FormArea>
        <RuleBox>
          <RuleHead>伏击涨停预报规则说明</RuleHead>
          <RuleText>①涨停标准：<b>收盘封实一为零，</b><Hot>5</Hot> 个大盘交易日内涨停有效。</RuleText>
          <RuleText>②预报标准：一字板不能预报，打开的可预报；<Hot>5日内不得重复预报</Hot></RuleText>
          <RuleText>③计分标准：当天预报的涨停，涨幅 <Hot $c="#2030d0">3%</Hot> 内不计涨停;ST涨停计0.5分</RuleText>
          <RuleText>您今天已经预报：<Hot $c="#2030d0">3</Hot> 次，总共预报了：<Hot $c="#2030d0">1255</Hot> 次。</RuleText>
          <RuleText>您的预报后涨停：<Hot>554.5</Hot> 支，成功率为：<Hot>44.18%</Hot></RuleText>
        </RuleBox>
      </ShotTop>
      <RecordTitle><Bulb />我的伏击记录</RecordTitle>
      <Pager>
        <PageItem $on>1</PageItem>
        {[2, 3, 4, 5, 6, 7, 8, 9].map((n) => <PageItem key={n}>{n}</PageItem>)}
        <PageItem $w={19}>10</PageItem>
        <PageItem $w={27}>... 63</PageItem>
        <PageGoto $w={60}><PageBox>1</PageBox>/ 63 页</PageGoto>
        <PageItem $w={42}>下一页 ▸</PageItem>
      </Pager>
      <RecordGrid>
        {["伏击人","伏击股票","伏击理由","伏击时间","伏击价","当前价","涨幅","涨停"].map((h) => <RecHead key={h}>{h}</RecHead>)}
        {REASONS.map((r) => (
          <React.Fragment key={r[0]}>
            <RecCell $up={r[7]} $tall={r[8]} $s={8.6}>fdbwymz</RecCell>
            <RecCell $up={r[7]} $tall={r[8]} $pl={2}>{r[0]}</RecCell>
            <RecCell $up={r[7]} $tall={r[8]}>{r[1]}</RecCell>
            <RecCell $up={r[7]} $tall={r[8]} $s={7.8}>{r[2]}</RecCell>
            <RecCell $up={r[7]} $tall={r[8]} $s={7.8}>{r[3]}</RecCell>
            <RecCell $up={r[7]} $tall={r[8]} $s={9.5} $bold>{r[4]}</RecCell>
            <RecCell $up={r[7]} $tall={r[8]} $s={9.5} $bold $center>{r[5]}</RecCell>
            <RecCell $up={r[7]} $tall={r[8]} $s={9} $bold $center>{r[6]}</RecCell>
          </React.Fragment>
        ))}
      </RecordGrid>
      <Highlight $l={49} $t={164} $w={538} $h={28} />
      <Highlight $l={47} $t={224} $w={540} $h={23} />
    </Shot>
  </Viewer>
);

export default function App() {
  return (
    <Page>
      <Global />
      <LeftCol>
        <LeftTabs>
          <LeftTab $active>当日目标..</LeftTab>
          <LeftTab>自选股</LeftTab>
          <LeftTab>最近浏览</LeftTab>
        </LeftTabs>
        <LeftBody>
          <WatchList>
            {WATCH.map(([name, code, price, chg, pct, up]) => {
              const c = up ? "#e83a3a" : "#20c820";
              return (
                <WatchRow key={code}>
                  <WatchName>{name}</WatchName>
                  <WatchPrice $c={c}>{price}</WatchPrice>
                  <WatchChange $c={c}>{chg}</WatchChange>
                  <WatchCode>{code}</WatchCode>
                  <WatchChange $c={c} $small>{pct}</WatchChange>
                </WatchRow>
              );
            })}
          </WatchList>
          <ScrollNub>▲</ScrollNub>
        </LeftBody>
        <NubBottom>▼</NubBottom>
      </LeftCol>

      <CenterCol>
        <TopBar>
          <LayoutIcon />
          {PERIODS.map((p, i) => (
            <Period key={p} $first={i === 0} $active={p === "日线"}>{p}</Period>
          ))}
          <Spacer />
          {TOOLS.map((t) => <TopButton key={t}>{t}</TopButton>)}
        </TopBar>
        <PriceChart />
        <VolumeChart />
        <IndicatorBar>
          {INDICATORS.map(([t, w, c]) => <IndicatorTab key={t} $w={w} $c={c}>{t}</IndicatorTab>)}
          <Spacer />
          <TemplateTab $w={36}>模板</TemplateTab>
          <TemplateTab $w={25}>+</TemplateTab>
          <TemplateTab $w={26}>−</TemplateTab>
        </IndicatorBar>
        <Lower>
          <LowerMain>
            <TableBox>
              <RowGrid $head>
                <HeadName>
                  <IndexBox><Settings size={14} fill="#777" color="#777" /></IndexBox>
                  名称(7)
                  <Dot />
                </HeadName>
                {COLS.map(([h], i) => (
                  <HeadCell key={h}>{h}{i === 0 && <SortArrow>↓</SortArrow>}</HeadCell>
                ))}
              </RowGrid>
              {BLOCKS.map(([name, vals], i) => {
                const cells = vals.split(" ");
                const up = !cells[0].startsWith("-");
                return (
                  <RowGrid key={name}>
                    <NameCell>
                      <IndexBox>{i + 1}</IndexBox>
                      <StockName>{name}</StockName>
                      <BlockTag>(板块)</BlockTag>
                    </NameCell>
                    {cells.map((v, j) => (
                      <Cell key={j} $c={valueColor(COLS[j][1], v, up)} $bold={COLS[j][1] === "signb"}>{v}</Cell>
                    ))}
                  </RowGrid>
                );
              })}
            </TableBox>
            <SlantTabs>
              {SLANT.map(([t, w, on]) => <SlantTab key={t} $w={w} $active={on}>{t}</SlantTab>)}
            </SlantTabs>
          </LowerMain>
          <ScrollBar>
            <ScrollBtn>▲</ScrollBtn>
            <ScrollThumb />
            <ScrollBtn>▼</ScrollBtn>
          </ScrollBar>
        </Lower>
        <BottomBar>
          <BottomItem $w={40}>扩展v</BottomItem>
          <BottomItem $w={57} $c="#54ffff">关联报价</BottomItem>
          <BottomItem $w={56} $c="#d8d840">短线基因</BottomItem>
          <BottomItem $w={43} $c="#e85050">财富圈</BottomItem>
          <Spacer />
          <BottomItem $w={90}>新用户福利专享</BottomItem>
          <BottomItem $w={46} $c="#d8d840">图文F10</BottomItem>
          <BottomItem $w={51} $c="#d8d840">侧边栏《</BottomItem>
        </BottomBar>
      </CenterCol>

      <RightCol>
        <QuoteHead>
          <TitleLine>
            <StockTitle>新华百货</StockTitle>
            <StockCode>600785</StockCode>
          </TitleLine>
          <PriceLine>
            <BigPrice>14.78</BigPrice>
            <PriceDelta>-0.43</PriceDelta>
            <PriceDelta>-2.83%</PriceDelta>
          </PriceLine>
          <LinkedBox>商业连锁<LinkedPct>0.75%</LinkedPct></LinkedBox>
          <Watermark>股海明灯</Watermark>
        </QuoteHead>
        <BookSide $line="#c89050">
          {SELL.map(([p, w, v]) => (
            <BookRow key={p}><BookPrice>{p}</BookPrice><BookBar $w={w} /><BookVol>{v}</BookVol></BookRow>
          ))}
        </BookSide>
        <BookSide $line={LINE}>
          {BUY.map(([p, w, v]) => (
            <BookRow key={p}><BookPrice>{p}</BookPrice><BookBar $w={w} /><BookVol>{v}</BookVol></BookRow>
          ))}
        </BookSide>
        <StatBlock $h={97}>
          <Stat><StatLabel>涨停</StatLabel><StatValue $c="#e03c3c">16.73</StatValue></Stat>
          <Stat><StatLabel>跌停</StatLabel><StatValue $c={GREEN}>13.69</StatValue></Stat>
          <Stat><StatLabel>最高</StatLabel><StatValue $c="#e03c3c">16.72</StatValue></Stat>
          <Stat><StatLabel>量比</StatLabel><StatValue $c="#e03c3c">1.92</StatValue></Stat>
          <Stat><StatLabel>最低</StatLabel><StatValue $c={GREEN}>14.65</StatValue></Stat>
          <Stat><StatLabel>市值</StatLabel><StatValue>33.3亿</StatValue></Stat>
          <Stat><StatLabel>现量</StatLabel><StatValue $c="#b030c0">1486</StatValue></Stat>
          <Stat><StatLabel>总量</StatLabel><StatValue>123838</StatValue></Stat>
          <Stat><StatLabel>外盘</StatLabel><StatValue $c="#d04040">59658</StatValue></Stat>
          <Stat><StatLabel>内盘</StatLabel><StatValue $c={GREEN}>64180</StatValue></Stat>
        </StatBlock>
        <StatBlock $h={60}>
          <Stat><StatLabel>换手</StatLabel><StatValue>5.49%</StatValue></Stat>
          <Stat><StatLabel>股本</StatLabel><StatValue>2.26亿</StatValue></Stat>
          <Stat><StatLabel>净资</StatLabel><StatValue>3.87</StatValue></Stat>
          <Stat><StatLabel>流通</StatLabel><StatValue>2.26亿</StatValue></Stat>
          <Stat><StatLabel>收益(三)</StatLabel><StatValue>0.220</StatValue></Stat>
          <Stat><StatLabel $s={14}>PE(动)</StatLabel><StatValue>33.2</StatValue></Stat>
        </StatBlock>
        <NameRow>新华百货</NameRow>
        <TickChart />
        <RightTabs>
          {["笔","价","细","势","联","值","主","筹"].map((t) => <RightTab key={t} $active={t === "势"}>{t}</RightTab>)}
        </RightTabs>
      </RightCol>

      <Annotations />
      <Caption>双向阳胜阴次日缩量砸盘到实底上方，当天预报次日涨停。</Caption>
      <ImageViewer />
    </Page>
  );
}
